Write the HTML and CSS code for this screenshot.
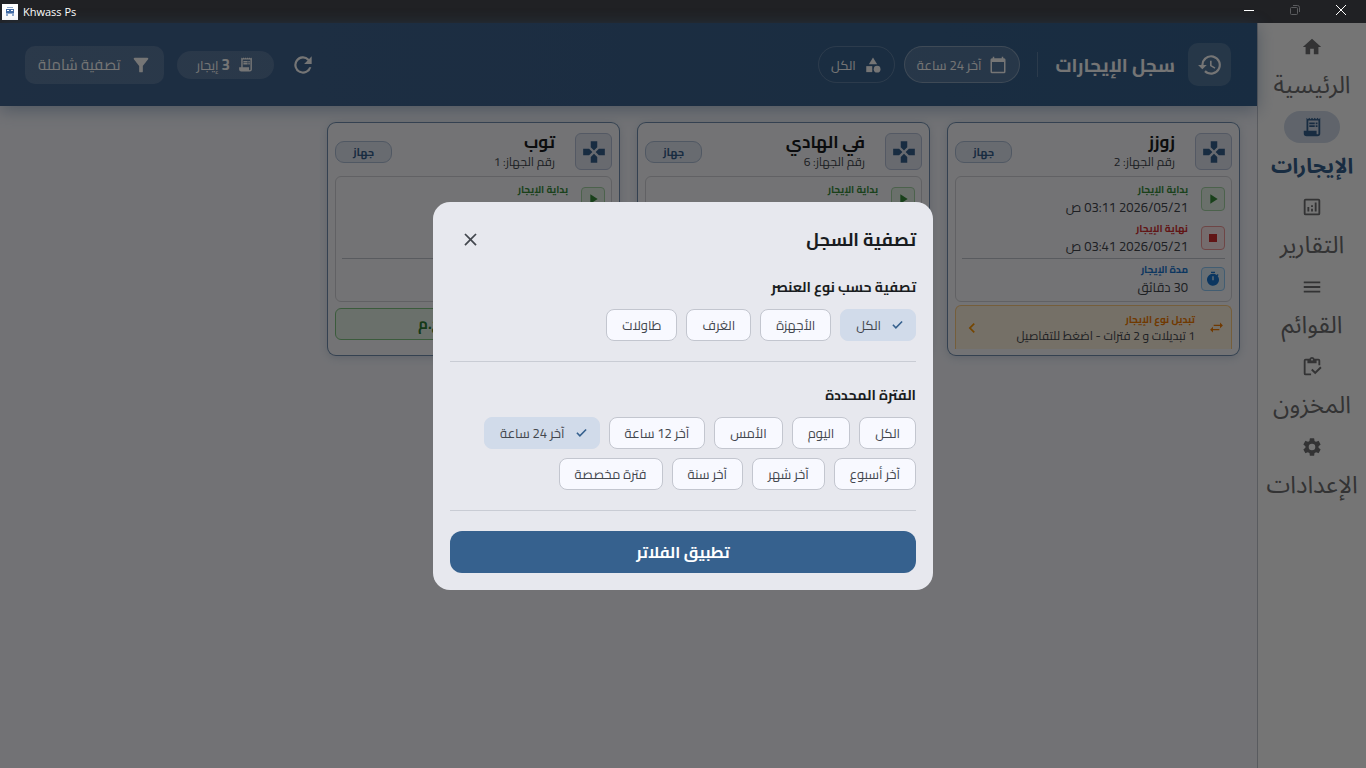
FILE: index.html
```html
<!DOCTYPE html>
<html lang="ar" dir="rtl">
<head>
<meta charset="utf-8">
<meta name="viewport" content="width=device-width, initial-scale=1">
<title>Khwass Ps</title>
<link rel="stylesheet" href="styles.css">
</head>
<body>
<svg class="sprite" aria-hidden="true">
  <symbol id="i-history" viewBox="0 0 24 24"><path d="M13 3a9 9 0 0 0-9 9H1l3.890 3.890.07.140L9 12H6a7 7 0 1 1 2.060 4.940l-1.420 1.420A9 9 0 1 0 13 3zm-1 5v5l4.280 2.540.72-1.210-3.500-2.080V8z"/></symbol>
  <symbol id="i-calendar" viewBox="0 0 24 24"><path d="M20 3h-1V1h-2v2H7V1H5v2H4a2 2 0 0 0-2 2v16a2 2 0 0 0 2 2h16a2 2 0 0 0 2-2V5a2 2 0 0 0-2-2zm0 18H4V8h16z"/></symbol>
  <symbol id="i-category" viewBox="0 0 24 24"><path d="M12 2 6.500 11h11z"/><circle cx="17.500" cy="17.500" r="4.500"/><path d="M3 13.500h8v8H3z"/></symbol>
  <symbol id="i-refresh" viewBox="0 0 24 24"><path d="M17.650 6.350A8 8 0 1 0 19.730 14h-2.080A6 6 0 1 1 12 6c1.660 0 3.140.690 4.220 1.780L13 11h7V4z"/></symbol>
  <symbol id="i-receipt" viewBox="0 0 24 24"><path d="M19.500 3.500 18 2l-1.500 1.500L15 2l-1.500 1.500L12 2l-1.500 1.500L9 2 7.500 3.500 6 2v14H3v3a3 3 0 0 0 3 3h12a3 3 0 0 0 3-3V2zM19 19a1 1 0 0 1-2 0v-3H8V5h11zM9 7h6v2H9zm7 0h2v2h-2zm-7 3h6v2H9zm7 0h2v2h-2z"/></symbol>
  <symbol id="i-filter" viewBox="0 0 24 24"><path d="M4.250 5.610C6.270 8.200 10 13 10 13v6a1 1 0 0 0 1 1h2a1 1 0 0 0 1-1v-6s3.720-4.800 5.740-7.390A1 1 0 0 0 18.950 4H5.040a1 1 0 0 0-.79 1.610z"/></symbol>
  <symbol id="i-home" viewBox="0 0 24 24"><path d="M10 20v-6h4v6h5v-8h3L12 3 2 12h3v8z"/></symbol>
  <symbol id="i-chart" viewBox="0 0 24 24"><path d="M19 3H5a2 2 0 0 0-2 2v14a2 2 0 0 0 2 2h14a2 2 0 0 0 2-2V5a2 2 0 0 0-2-2zm0 16H5V5h14zM7 12h2v5H7zm8-5h2v10h-2zm-4 7h2v3h-2zm0-4h2v2h-2z"/></symbol>
  <symbol id="i-menu" viewBox="0 0 24 24"><path d="M3 18h18v-2H3zm0-5h18v-2H3zm0-7v2h18V6z"/></symbol>
  <symbol id="i-inventory" viewBox="0 0 24 24"><path d="M5 5h2v3h10V5h2v5h2V5a2 2 0 0 0-2-2h-4.180a3 3 0 0 0-5.640 0H5a2 2 0 0 0-2 2v14a2 2 0 0 0 2 2h6v-2H5zm7-2a1 1 0 1 1 0 2 1 1 0 0 1 0-2zm9 8.500L15.510 17l-3.010-3-1.500 1.500 4.510 4.500 6.990-7z"/></symbol>
  <symbol id="i-settings" viewBox="0 0 24 24"><path d="M19.140 12.940c.04-.3.060-.61.060-.94s-.02-.64-.07-.94l2.030-1.580a.49.49 0 0 0 .12-.61l-1.920-3.320a.49.49 0 0 0-.59-.22l-2.390.96a7 7 0 0 0-1.620-.94l-.36-2.540a.48.48 0 0 0-.48-.41h-3.840a.47.47 0 0 0-.47.41l-.36 2.540c-.59.240-1.130.570-1.620.94l-2.390-.96a.48.48 0 0 0-.59.220L2.740 8.870a.47.47 0 0 0 .12.61l2.030 1.580c-.05.3-.09.630-.09.94s.02.640.07.94l-2.030 1.580a.49.49 0 0 0-.12.61l1.920 3.320c.12.220.370.290.59.220l2.390-.96c.5.380 1.030.700 1.620.94l.36 2.540c.05.240.240.410.48.410h3.840c.240 0 .440-.17.470-.41l.36-2.540c.59-.24 1.130-.56 1.620-.94l2.390.96c.22.080.470 0 .59-.22l1.920-3.320a.47.47 0 0 0-.12-.61zM12 15.600a3.600 3.600 0 1 1 0-7.200 3.600 3.600 0 0 1 0 7.200z"/></symbol>
  <symbol id="i-gamepad" viewBox="0 0 24 24"><path d="M15 7.500V2H9v5.500l3 3zM7.500 9H2v6h5.500l3-3zM9 16.500V22h6v-5.500l-3-3zM16.500 9l-3 3 3 3H22V9z"/></symbol>
  <symbol id="i-play" viewBox="0 0 24 24"><path d="M8 5v14l11-7z"/></symbol>
  <symbol id="i-stop" viewBox="0 0 24 24"><path d="M6 6h12v12H6z"/></symbol>
  <symbol id="i-timer" viewBox="0 0 24 24"><path d="M9 1h6v2H9zm10.030 6.390 1.420-1.420a11 11 0 0 0-1.410-1.410l-1.420 1.420A9 9 0 1 0 19.030 7.390zM13 14h-2V8h2z"/></symbol>
  <symbol id="i-swap" viewBox="0 0 24 24"><path d="M6.990 11 3 15l3.990 4v-3H16v-2H6.990zM21 9l-3.990-4v3H8v2h9.010v3z"/></symbol>
  <symbol id="i-chevron" viewBox="0 0 24 24"><path d="M15.410 7.410 14 6l-6 6 6 6 1.410-1.410L10.830 12z"/></symbol>
  <symbol id="i-close" viewBox="0 0 24 24"><path d="M19 6.410 17.590 5 12 10.590 6.410 5 5 6.410 10.590 12 5 17.590 6.410 19 12 13.410 17.590 19 19 17.590 13.410 12z"/></symbol>
  <symbol id="i-check" viewBox="0 0 24 24"><path d="M3.500 12.500 9 18 20.500 6.500" fill="none" stroke="currentColor" stroke-width="3"/></symbol>
</svg>

<div class="titlebar" dir="ltr">
  <svg class="app-logo" viewBox="0 0 16 16" aria-hidden="true"><path fill="#fff" d="M0 0h16v16H0z"/><path fill="#8fa9cc" d="M5 3h6v1H5zM4 9h8v3H4z"/><path fill="#416ba4" d="M4 5h8v4H4z"/><path fill="#fff" d="M5 6h2v1H5zM9 6h2v1H9zM6 10h4v2H6z"/></svg>
  <span class="app-name">Khwass Ps</span>
  <div class="window-controls">
    <button class="win-btn" aria-label="Minimize"><svg viewBox="0 0 12 12"><path d="M1 6.500h10"/></svg></button>
    <button class="win-btn is-disabled" aria-label="Restore" disabled><svg viewBox="0 0 12 12"><path d="M1.500 4.500a1 1 0 0 1 1-1h5a1 1 0 0 1 1 1v5a1 1 0 0 1-1 1h-5a1 1 0 0 1-1-1zM4 1.500h4.500a2 2 0 0 1 2 2V8"/></svg></button>
    <button class="win-btn" aria-label="Close"><svg viewBox="0 0 12 12"><path d="m1 1 10 10M11 1 1 11"/></svg></button>
  </div>
</div>

<div class="app">
  <nav class="sidebar">
    <a class="nav-item" href="#home"><span class="nav-icon"><svg><use href="#i-home"/></svg></span><span class="nav-label">الرئيسية</span></a>
    <a class="nav-item is-active" href="#rentals" aria-current="page"><span class="nav-icon"><svg><use href="#i-receipt"/></svg></span><span class="nav-label">الإيجارات</span></a>
    <a class="nav-item" href="#reports"><span class="nav-icon"><svg><use href="#i-chart"/></svg></span><span class="nav-label">التقارير</span></a>
    <a class="nav-item" href="#menus"><span class="nav-icon"><svg><use href="#i-menu"/></svg></span><span class="nav-label">القوائم</span></a>
    <a class="nav-item" href="#stock"><span class="nav-icon"><svg><use href="#i-inventory"/></svg></span><span class="nav-label">المخزون</span></a>
    <a class="nav-item" href="#settings"><span class="nav-icon"><svg><use href="#i-settings"/></svg></span><span class="nav-label">الإعدادات</span></a>
  </nav>

  <main class="main">
    <header class="header">
      <span class="header-icon"><svg><use href="#i-history"/></svg></span>
      <h1 class="header-title">سجل الإيجارات</h1>
      <span class="header-divider"></span>
      <button class="pill pill-filled"><svg><use href="#i-calendar"/></svg>آخر 24 ساعة</button>
      <button class="pill"><svg><use href="#i-category"/></svg>الكل</button>
      <span class="spacer"></span>
      <button class="refresh" aria-label="تحديث"><svg><use href="#i-refresh"/></svg></button>
      <span class="count"><svg><use href="#i-receipt"/></svg><span><b>3</b> إيجار</span></span>
      <button class="full-filter"><svg><use href="#i-filter"/></svg>تصفية شاملة</button>
    </header>

    <section class="cards">
      <article class="card">
        <div class="card-head">
          <span class="device-icon"><svg><use href="#i-gamepad"/></svg></span>
          <div class="device-text"><h2>زوزز</h2><p>رقم الجهاز: 2</p></div>
          <span class="badge">جهاز</span>
        </div>
        <div class="info">
          <div class="info-row is-start"><span class="info-icon"><svg><use href="#i-play"/></svg></span><div><h3>بداية الإيجار</h3><p>2026/05/21 03:11 ص</p></div></div>
          <div class="info-row is-end"><span class="info-icon"><svg><use href="#i-stop"/></svg></span><div><h3>نهاية الإيجار</h3><p>2026/05/21 03:41 ص</p></div></div>
          <div class="info-row is-duration"><span class="info-icon"><svg><use href="#i-timer"/></svg></span><div><h3>مدة الإيجار</h3><p>30 دقائق</p></div></div>
        </div>
        <div class="card-foot">
          <button class="switch">
            <svg class="switch-icon"><use href="#i-swap"/></svg>
            <span class="switch-text"><strong>تبديل نوع الإيجار</strong><span>1 تبديلات و 2 فترات - اضغط للتفاصيل</span></span>
            <svg class="switch-arrow"><use href="#i-chevron"/></svg>
          </button>
        </div>
      </article>

      <article class="card">
        <div class="card-head">
          <span class="device-icon"><svg><use href="#i-gamepad"/></svg></span>
          <div class="device-text"><h2>في الهادي</h2><p>رقم الجهاز: 6</p></div>
          <span class="badge">جهاز</span>
        </div>
        <div class="info">
          <div class="info-row is-start"><span class="info-icon"><svg><use href="#i-play"/></svg></span><div><h3>بداية الإيجار</h3><p>&nbsp;</p></div></div>
          <div class="info-row"></div>
          <div class="info-row is-duration"></div>
        </div>
      </article>

      <article class="card">
        <div class="card-head">
          <span class="device-icon"><svg><use href="#i-gamepad"/></svg></span>
          <div class="device-text"><h2>توب</h2><p>رقم الجهاز: 1</p></div>
          <span class="badge">جهاز</span>
        </div>
        <div class="info">
          <div class="info-row is-start"><span class="info-icon"><svg><use href="#i-play"/></svg></span><div><h3>بداية الإيجار</h3><p>&nbsp;</p></div></div>
          <div class="info-row"></div>
          <div class="info-row is-duration"></div>
        </div>
        <div class="card-foot"><div class="total">ج.م</div></div>
      </article>
    </section>
  </main>

  <div class="scrim">
    <section class="dialog" role="dialog" aria-modal="true" aria-labelledby="dialog-title">
      <div class="dialog-head">
        <h2 id="dialog-title">تصفية السجل</h2>
        <button class="dialog-close" aria-label="إغلاق"><svg><use href="#i-close"/></svg></button>
      </div>
      <h3 class="group-title" id="type-title">تصفية حسب نوع العنصر</h3>
      <div class="chips" role="group" aria-labelledby="type-title">
        <button class="chip is-selected" aria-pressed="true"><svg><use href="#i-check"/></svg>الكل</button>
        <button class="chip" aria-pressed="false">الأجهزة</button>
        <button class="chip" aria-pressed="false">الغرف</button>
        <button class="chip" aria-pressed="false">طاولات</button>
      </div>
      <hr class="rule">
      <h3 class="group-title" id="period-title">الفترة المحددة</h3>
      <div class="chips" role="group" aria-labelledby="period-title">
        <button class="chip" aria-pressed="false">الكل</button>
        <button class="chip" aria-pressed="false">اليوم</button>
        <button class="chip" aria-pressed="false">الأمس</button>
        <button class="chip" aria-pressed="false">آخر 12 ساعة</button>
        <button class="chip is-selected" aria-pressed="true"><svg><use href="#i-check"/></svg>آخر 24 ساعة</button>
        <button class="chip" aria-pressed="false">آخر أسبوع</button>
        <button class="chip" aria-pressed="false">آخر شهر</button>
        <button class="chip" aria-pressed="false">آخر سنة</button>
        <button class="chip" aria-pressed="false">فترة مخصصة</button>
      </div>
      <hr class="rule">
      <button class="apply">تطبيق الفلاتر</button>
    </section>
  </div>
</div>
</body>
</html>
```

FILE: styles.css
```css
*, *::before, *::after { box-sizing: border-box; }

body {
  margin: 0;
  height: 100vh;
  display: flex;
  flex-direction: column;
  overflow: hidden;
  font-family: Cairo, "Open Sans", "DejaVu Sans", sans-serif;
  font-size: 13px;
  color: #191c20;
  background: #f8f9ff;
}

h1, h2, h3, p { margin: 0; }
button { font: inherit; color: inherit; border: 0; background: none; padding: 0; }
svg { display: block; flex: none; fill: currentColor; }
.sprite { position: absolute; width: 0; height: 0; }

/* Window title bar */
.titlebar {
  flex: none;
  display: flex;
  align-items: center;
  height: 23px;
  padding-left: 2px;
  gap: 5px;
  background: #202124;
  color: #fff;
  font-family: "Segoe UI", "Open Sans", sans-serif;
  font-size: 11px;
}
.app-logo { width: 16px; height: 16px; }
.window-controls { align-self: flex-start; margin-left: auto; display: flex; padding-right: 2px; }
.win-btn { width: 46px; height: 20px; display: grid; place-items: center; }
.win-btn svg { width: 12px; height: 12px; fill: none; stroke: #fff; }
.win-btn.is-disabled svg { stroke: #5b5c5f; }

.app { position: relative; flex: 1; min-height: 0; display: flex; }

/* Navigation rail */
.sidebar {
  flex: none;
  width: 109px;
  display: flex;
  flex-direction: column;
  background: #fff;
  border-left: 1px solid #c3c6cf;
}
.nav-item {
  flex: none;
  height: 80px;
  padding-top: 8px;
  display: flex;
  flex-direction: column;
  align-items: center;
  color: #6f7072;
  text-decoration: none;
}
.nav-icon { flex: none; width: 56px; height: 32px; border-radius: 16px; display: grid; place-items: center; }
.nav-icon svg { width: 22px; height: 22px; }
.nav-label { flex: none; font-family: "Segoe UI", "Noto Sans Arabic", "DejaVu Sans", sans-serif; font-size: 24px; line-height: 46px; white-space: nowrap; }
.is-active { color: #36618e; }
.is-active .nav-icon { background: #d1dbea; }
.is-active .nav-label { font-size: 21px; font-weight: 700; }

/* Page header */
.main { flex: 1; min-width: 0; }
.header {
  display: flex;
  align-items: center;
  height: 83px;
  padding: 0 26px 0 25px;
  color: #fff;
  background: linear-gradient(to left, #36618e, #426591);
  box-shadow: 0 4px 16px rgba(54, 97, 142, .4);
}
.header-icon { width: 43px; height: 43px; border-radius: 10px; display: grid; place-items: center; background: rgba(255, 255, 255, .15); }
.header-icon svg { width: 26px; height: 26px; }
.header-title { margin-right: 13px; font-size: 19px; line-height: 32px; white-space: nowrap; }
.header-divider { width: 1px; height: 25px; margin: 0 17px; background: rgba(255, 255, 255, .2); }
.pill {
  display: flex;
  align-items: center;
  gap: 8px;
  height: 37px;
  padding: 0 12px;
  margin-left: 9px;
  border: 1px solid rgba(255, 255, 255, .2);
  border-radius: 19px;
  white-space: nowrap;
}
.pill svg { width: 18px; height: 18px; }
.pill-filled { background: rgba(255, 255, 255, .15); border-color: rgba(255, 255, 255, .3); }
.spacer { flex: 1; }
.refresh { margin-left: 16px; width: 26px; height: 26px; }
.refresh svg { width: 26px; height: 26px; }
.count {
  display: flex;
  align-items: center;
  gap: 7px;
  height: 28px;
  padding: 0 20px;
  margin-left: 13px;
  border-radius: 14px;
  background: rgba(255, 255, 255, .15);
  white-space: nowrap;
}
.count svg { width: 17px; height: 17px; }
.count b { font-size: 15px; }
.full-filter {
  display: flex;
  align-items: center;
  gap: 9px;
  height: 38px;
  padding: 0 12px 0 13px;
  border-radius: 10px;
  background: rgba(255, 255, 255, .15);
  font-size: 15px;
  white-space: nowrap;
}
.full-filter svg { width: 22px; height: 22px; }

/* Rental cards */
.cards {
  display: grid;
  grid-template-columns: repeat(4, 1fr);
  grid-auto-rows: 234px;
  gap: 17px;
  padding: 16px 17px;
}
.card {
  display: flex;
  flex-direction: column;
  padding: 10px 7px 6px;
  border: 1px solid rgba(54, 97, 142, .7);
  border-radius: 9px;
  background: #fbfbff;
  box-shadow: 0 2px 8px rgba(54, 97, 142, .2);
}
.card-head { display: flex; align-items: center; height: 37px; margin-bottom: 6px; }
.device-icon {
  width: 37px;
  height: 37px;
  border: 1px solid #b7c3da;
  border-radius: 6px;
  display: grid;
  place-items: center;
  color: #36618e;
  background: #e3e7f2;
}
.device-icon svg { width: 26px; height: 26px; }
.device-text { flex: 1; margin-right: 20px; }
.device-text h2 { font-size: 17px; line-height: 20px; }
.device-text p { font-size: 12px; line-height: 20px; color: #43474e; }
.badge {
  width: 57px;
  height: 22px;
  border: 1px solid #afc0d8;
  border-radius: 9px;
  background: #e3e9f5;
  color: #36618e;
  font-size: 11px;
  font-weight: 700;
  line-height: 20px;
  text-align: center;
}
.info {
  flex: none;
  display: flex;
  flex-direction: column;
  gap: 2px;
  padding: 3px 6px 4px;
  border: 1px solid #d3d4da;
  border-radius: 6px;
}
.info-row { display: flex; align-items: center; gap: 13px; height: 37px; }
.info-row.is-duration { height: 39px; padding-top: 2px; border-top: 1px solid #c3c6cf; }
.info-row h3 { font-size: 10px; line-height: 16px; }
.info-row p { line-height: 18px; color: #43474e; }
.info-icon {
  width: 24px;
  height: 24px;
  display: grid;
  place-items: center;
  border: 1px solid currentColor;
  border-radius: 4px;
}
.info-icon svg { width: 16px; height: 16px; }
.is-start h3, .is-start .info-icon svg { color: #388e3c; }
.is-start .info-icon { color: #a5d6a7; background: #e8f5e9; }
.is-end h3, .is-end .info-icon svg { color: #d32f2f; }
.is-end .info-icon { color: #ef9a9a; background: #ffebee; }
.is-duration h3, .is-duration .info-icon svg { color: #1976d2; }
.is-duration .info-icon { color: #90caf9; background: #e3f2fd; }
.card-foot { flex: 1; min-height: 0; padding-top: 3px; overflow: hidden; }
.switch {
  display: flex;
  align-items: center;
  width: 100%;
  height: 44px;
  padding: 0 6px;
  border: 1px solid #ffcc80;
  border-bottom: 0;
  border-radius: 6px 6px 0 0;
  background: #fff3e0;
  text-align: right;
}
.switch-icon { width: 17px; height: 17px; color: #f57c00; }
.switch-text { flex: 1; display: flex; flex-direction: column; margin-right: 13px; font-size: 12px; line-height: 16px; white-space: nowrap; color: #43474e; }
.switch-text strong { font-size: 10px; color: #f57c00; }
.switch-arrow { width: 20px; height: 20px; color: #ff9800; }
.total {
  height: 32px;
  margin-top: 3px;
  padding-left: 82px;
  border: 1px solid #81c784;
  border-radius: 6px;
  background: #e8f5e9;
  color: #2e7d32;
  font-size: 15px;
  font-weight: 700;
  line-height: 30px;
  text-align: left;
}

/* Filter dialog */
.scrim {
  position: absolute;
  inset: 0;
  display: grid;
  place-items: center;
  background: rgba(0, 0, 0, .54);
}
.dialog {
  width: 500px;
  max-width: 100%;
  padding: 17px;
  border-radius: 17px;
  background: #e7e8ee;
}
.dialog-head { display: flex; align-items: center; justify-content: space-between; height: 41px; margin-bottom: 14px; }
.dialog-head h2 { font-size: 18px; }
.dialog-close { width: 41px; height: 41px; display: grid; place-items: center; color: #43474e; }
.dialog-close svg { width: 21px; height: 21px; }
.group-title { font-size: 14px; line-height: 26px; margin-bottom: 9px; }
.chips { display: flex; flex-wrap: wrap; gap: 9px; }
.chip {
  display: flex;
  align-items: center;
  height: 32px;
  padding: 0 15px;
  border: 1px solid #c3c6cf;
  border-radius: 8px;
  background: #f8f9ff;
  color: #43474e;
  white-space: nowrap;
}
.chip svg { width: 13px; height: 13px; color: #36618e; margin-left: 10px; }
.chip.is-selected { padding-right: 11px; border-color: #d1dbea; background: #d1dbea; }
.rule { height: 1px; margin: 20px 0; border: 0; background: #c9ccd4; }
.apply {
  width: 100%;
  height: 42px;
  border-radius: 12px;
  background: #36618e;
  color: #fff;
  font-size: 16px;
  font-weight: 700;
}
```
